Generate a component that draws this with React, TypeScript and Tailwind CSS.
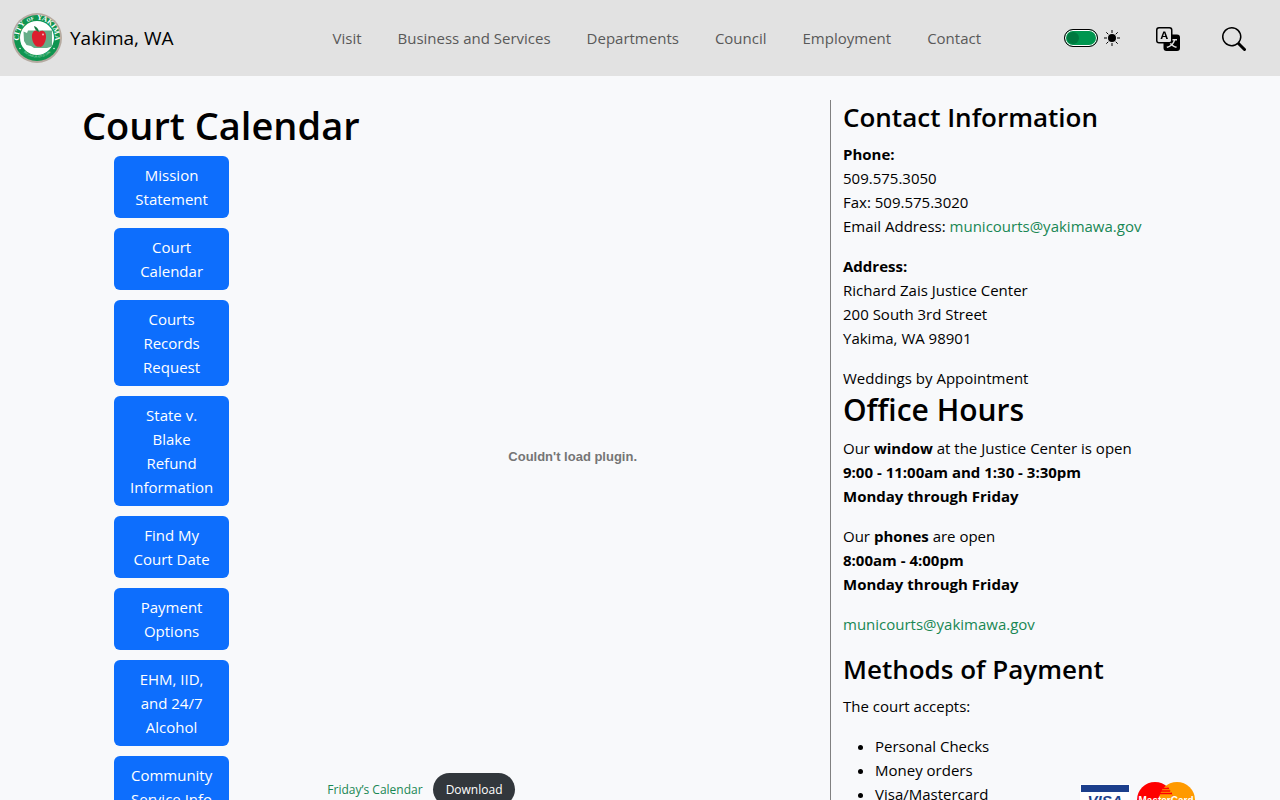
import { BsSearch, BsTranslate } from "react-icons/bs";

const navItems = ["Visit", "Business and Services", "Departments", "Council", "Employment", "Contact"];

const courtLinks = [
  "Mission Statement",
  "Court Calendar",
  "Courts Records Request",
  "State v. Blake Refund Information",
  "Find My Court Date",
  "Payment Options",
  "EHM, IID, and 24/7 Alcohol",
  "Community Service Info",
];

function CitySeal() {
  return (
    <svg viewBox="0 0 100 100" className="size-[50px] shrink-0" role="img" aria-label="City of Yakima seal">
      <defs>
        <path id="seal-top" d="M22 72 A36 36 0 1 1 78 72" />
        <path id="seal-bottom" d="M18 73 A40 40 0 0 0 82 73" />
      </defs>
      <circle cx="50" cy="50" r="50" fill="#b5aaa0" />
      <circle cx="50" cy="50" r="46" fill="#0f9550" />
      <circle cx="50" cy="50" r="34" fill="#ffffff" />
      <path d="M23 37 L30 40 L32 35 L80 35 L80 67 L70 70 L44 70 L38 66 L29 64 L24 56 Z" fill="#66ad88" />
      <path
        d="M54 38 C46 31 39 38 40 49 C41 61 49 70 54 67 C60 71 67 60 68 49 C69 37 61 32 54 38 Z"
        fill="#dc1f2e"
      />
      <path d="M54 38 C53 31 49 27 44 26 C45 32 48 36 54 38 Z" fill="#167a3d" />
      <circle cx="62" cy="43" r="2" fill="#f7b9bc" />
      <text fill="#ffffff" fontSize="15" fontWeight="700" fontFamily="Liberation Serif, serif">
        <textPath href="#seal-top" startOffset="50%" textAnchor="middle">
          CITY<tspan fontSize="10">{"\u00a0\u00a0OF\u00a0\u00a0"}</tspan>YAKIMA
        </textPath>
      </text>
      <circle cx="16" cy="71" r="1.500" fill="#ffffff" />
      <circle cx="84" cy="71" r="1.500" fill="#ffffff" />
      <text fill="#b9e0c9" fontSize="6" fontFamily="Liberation Serif, serif">
        <textPath href="#seal-bottom" startOffset="50%" textAnchor="middle">
          INCORPORATED 1886
        </textPath>
      </text>
    </svg>
  );
}

function Sun() {
  return (
    <svg viewBox="0 0 16 16" className="size-4" aria-hidden="true">
      <circle cx="8" cy="8" r="4" />
      <path
        d="M8 0v3M8 13v3M0 8h3M13 8h3M2.300 2.300l2 2M11.700 11.700l2 2M2.300 13.700l2-2M11.700 4.300l2-2"
        stroke="#000000"
        strokeWidth="1"
      />
    </svg>
  );
}

function PaymentCards() {
  return (
    <svg viewBox="0 0 116 36" className="mt-12 h-9 w-[116px]" role="img" aria-label="Visa and MasterCard">
      <rect x="0" y="2" width="50" height="33" fill="#ffffff" />
      <rect x="1" y="3" width="48" height="7" fill="#1c3f8c" />
      <text
        x="25"
        y="24"
        textAnchor="middle"
        fontSize="15"
        fontWeight="700"
        fontStyle="italic"
        fill="#1c3f8c"
        fontFamily="Liberation Sans, sans-serif"
      >
        VISA
      </text>
      <rect x="1" y="28" width="48" height="6" fill="#f0a020" />
      <circle cx="97" cy="18" r="18" fill="#ff9a00" />
      <circle cx="75" cy="18" r="18" fill="#fe0000" />
      <path d="M86 3.800 A18 18 0 0 1 86 32.200 A18 18 0 0 1 86 3.800 Z" fill="#ff9a00" />
      <path d="M83 6.500h6M81 9h9M80 11.500h12M80 25h12M81 27.500h9" stroke="#fe0000" strokeWidth="1.500" />
      <text
        x="86"
        y="22"
        textAnchor="middle"
        fontSize="10"
        fontWeight="700"
        fill="#ffffff"
        fontFamily="Liberation Sans, sans-serif"
      >
        MasterCard
      </text>
    </svg>
  );
}

function MailLink() {
  return (
    <a href="mailto:municourts@yakimawa.gov" className="text-[#198754]">
      municourts@yakimawa.gov
    </a>
  );
}

export default function App() {
  return (
    <div className="min-h-screen bg-[#f8f9fb] font-['Open_Sans','Noto_Sans',sans-serif] text-[15px] leading-6 text-black">
      <header className="flex h-[76px] items-center bg-[#e2e2e2] px-3">
        <a href="#" className="flex items-center gap-2 text-[19px]">
          <CitySeal />
          Yakima, WA
        </a>
        <nav className="flex flex-1 justify-center gap-9 pl-[76px] text-[#595959]">
          {navItems.map((item) => (
            <a key={item} href="#">
              {item}
            </a>
          ))}
        </nav>
        <div className="flex items-center pr-[22px]">
          <label className="flex items-center gap-1.5">
            <input
              type="checkbox"
              role="switch"
              aria-label="Light mode"
              defaultChecked
              className="peer sr-only"
            />
            <span className="flex h-[18px] w-[34px] items-center rounded-full border border-black bg-[#00964f] p-0.5 ring-1 ring-white ring-inset">
              <span className="size-3 rounded-full bg-[#00783f]" />
            </span>
            <Sun />
          </label>
          <button type="button" aria-label="Translate" className="ml-9 pt-0.5">
            <BsTranslate size={24} />
          </button>
          <button type="button" aria-label="Search" className="ml-[42px] pt-0.5">
            <BsSearch size={24} />
          </button>
        </div>
      </header>

      <main className="mx-auto flex max-w-[1140px] pt-6">
        <section className="w-2/3 px-3">
          <h1 className="mb-1.5 text-[38px] leading-[50px] font-semibold">Court Calendar</h1>
          <div className="flex items-start justify-between">
            <ul className="flex w-1/5 flex-col gap-2.5 pl-8">
              {courtLinks.map((link) => (
                <li key={link}>
                  <a href="#" className="block rounded-md bg-[#0d6efd] px-3 py-[7px] text-center text-white">
                    {link}
                  </a>
                </li>
              ))}
            </ul>
            <div className="w-2/3">
              <div className="flex h-[602px] items-center justify-center font-['Liberation_Sans',Arial,sans-serif] text-[13px] font-bold text-[#757575]">
                Couldn't load plugin.
              </div>
              <div className="flex items-center gap-2.5 pt-[15px] text-xs leading-[17px]">
                <a href="#" className="text-[#198754]">
                  Friday’s Calendar
                </a>
                <a href="#" download className="rounded-full bg-[#32373c] px-[13px] py-2 text-white">
                  Download
                </a>
              </div>
            </div>
          </div>
        </section>

        <aside className="w-1/3 border-l border-[#808080] px-3">
          <h2 className="mb-2 text-[26px] leading-[34px] font-semibold">Contact Information</h2>
          <p className="mb-4">
            <strong>Phone:</strong>
            <br />
            509.575.3050
            <br />
            Fax: 509.575.3020
            <br />
            Email Address: <MailLink />
          </p>
          <p className="mb-4">
            <strong>Address:</strong>
            <br />
            Richard Zais Justice Center
            <br />
            200 South 3rd Street
            <br />
            Yakima, WA 98901
          </p>
          <p>Weddings by Appointment</p>
          <h2 className="mb-1.5 text-[30px] leading-10 font-semibold">Office Hours</h2>
          <p className="mb-4">
            Our <strong>window</strong> at the Justice Center is open
            <br />
            <strong>9:00 - 11:00am and 1:30 - 3:30pm</strong>
            <br />
            <strong>Monday through Friday</strong>
          </p>
          <p className="mb-4">
            Our <strong>phones</strong> are open
            <br />
            <strong>8:00am - 4:00pm</strong>
            <br />
            <strong>Monday through Friday</strong>
          </p>
          <p className="mb-4">
            <MailLink />
          </p>
          <h2 className="mb-2 text-[26px] leading-[34px] font-semibold">Methods of Payment</h2>
          <p className="mb-4">The court accepts:</p>
          <div className="flex items-start justify-between pr-0.5">
            <ul className="list-disc pl-8">
              <li>Personal Checks</li>
              <li>Money orders</li>
              <li>Visa/Mastercard</li>
            </ul>
            <PaymentCards />
          </div>
        </aside>
      </main>
    </div>
  );
}
